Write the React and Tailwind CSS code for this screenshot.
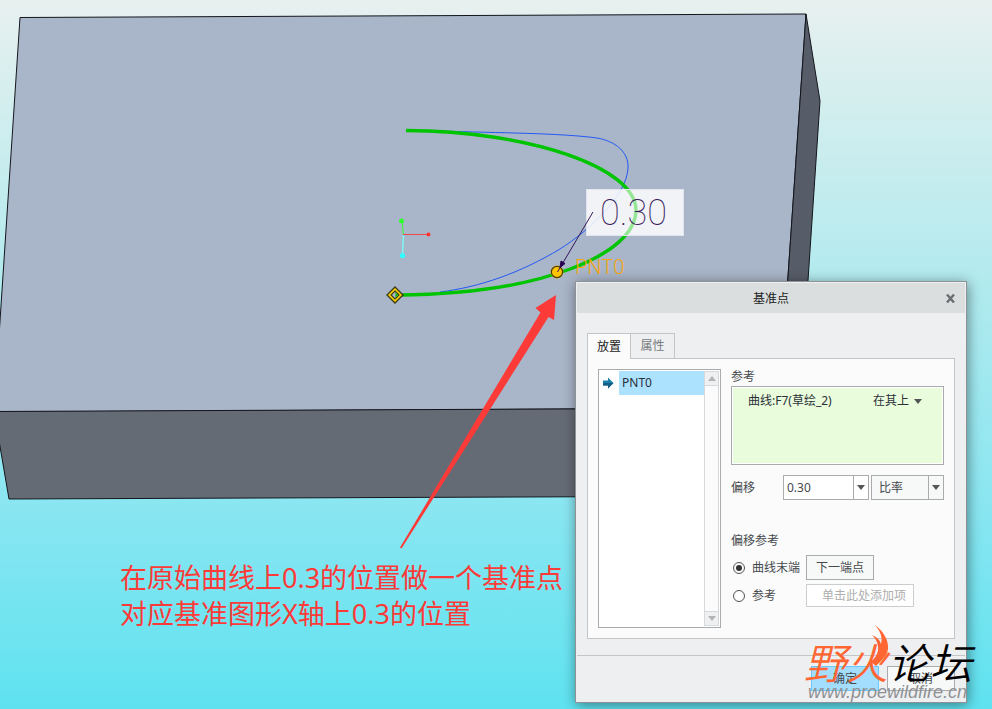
import { useState } from 'react';
import clsx from 'clsx';

const TABS = ['放置', '属性'];

const GREEN_CURVE = 'M406 130.500C530 131 636 168 636 210C636 255 540 294 398 295';

/** Small filled triangle used by drop-downs and scroll buttons */
function Caret({ up = false, className }) {
  return (
    <svg viewBox="0 0 8 5" className={clsx('h-[5px] w-2 shrink-0 fill-current', className)} aria-hidden="true">
      <path d={up ? 'M4 0L8 5H0Z' : 'M0 0H8L4 5Z'} />
    </svg>
  );
}

/** Model viewport: block, sketched curve, datum graph curve and markers */
function Scene() {
  return (
    <svg width="992" height="709" viewBox="0 0 992 709" className="absolute top-0 left-0 max-w-none" fill="none">
      <defs>
        <clipPath id="value-box">
          <rect x="586" y="189" width="98" height="47" />
        </clipPath>
      </defs>

      {/* Block */}
      <g stroke="#14161c" strokeWidth="1">
        <path d="M20 17.5L806 14L779 408L-6 412Z" fill="#a9b5c8" />
        <path d="M-6 411.5L779 408L776 496L9 499Z" fill="#646b75" />
        <path d="M806 14L820 101L794 490L776 496L779 408Z" fill="#575d68" />
      </g>

      {/* Curves */}
      <path
        d="M440 131C500 133 560 133 597 138C615 141 629 152 628 168C627 195 590 230 560 249C520 273 480 287 440 292"
        stroke="#2459f5"
      />
      <path d={GREEN_CURVE} stroke="#00c400" strokeWidth="3.4" />

      {/* Coordinate system */}
      <path d="M402 221L403.500 235" stroke="#30ff30" />
      <path d="M403.500 235L402.500 255" stroke="#7ff5f5" strokeWidth="1.500" />
      <path d="M403 234.500H428" stroke="#f04848" />
      <circle cx="401.500" cy="221" r="2.500" fill="#30ff30" />
      <circle cx="402.500" cy="255.500" r="2.600" fill="#30ffff" />
      <circle cx="428.500" cy="234.500" r="1.900" fill="#ff3030" />

      {/* Curve end */}
      <path d="M395 287L403 295L395 303L387 295Z" fill="#ffd200" stroke="#3c3c1c" strokeWidth="1.400" />
      <path d="M395 291L399 295L395 299L391 295Z" fill="#a9b5c8" stroke="#3c3c1c" strokeWidth="1.200" />
      <path d="M395.500 292.500L398 295L395.500 297.500Z" fill="#00c400" />

      {/* Datum point with value */}
      <text x="575" y="274" fill="#f5a50c" fontSize="20" fontWeight="300" fontFamily="Roboto, sans-serif">
        PNT0
      </text>
      <rect x="586" y="189" width="98" height="47" fill="#fff" fillOpacity="0.84" />
      <path d={GREEN_CURVE} stroke="#00c400" strokeWidth="3.4" opacity="0.3" clipPath="url(#value-box)" />
      <rect x="586.500" y="189.500" width="97" height="46" stroke="#dfe4ee" />
      <circle cx="557" cy="272" r="6.400" fill="#ffc400" />
      <circle cx="557" cy="272" r="5.600" stroke="#4a3c10" strokeWidth="1.200" />
      <path d="M593 212L557.500 272" stroke="#36185c" />
      <path d="M560 267.500L561 261L565 263.500Z" fill="#2a0050" stroke="#2a0050" />
      <text x="600" y="225" fill="#36185c" fontSize="36" fontWeight="100" fontFamily="Roboto, sans-serif">
        0.30
      </text>

      {/* Annotation arrow */}
      <path d="M556 295L535.500 308L540.500 312.500L400 547.500L401.500 548.500L548.500 317L554 320Z" fill="#fc3a38" />
    </svg>
  );
}

function PointList() {
  return (
    <div className="flex h-[259px] w-[123px] shrink-0 border border-[#a9abad] bg-white p-px">
      <div className="grow">
        <button type="button" className="flex h-6 w-full items-center text-left">
          <span className="flex w-[19px] shrink-0 items-center pl-[3px]">
            <svg viewBox="0 0 11 12" className="h-3 w-[11px]" aria-hidden="true">
              <path d="M0 3.500H5V0.500L10.500 6L5 11.500V8.500H0Z" fill="#1b7fab" />
              <path d="M0 6H10.500L5 11.500V8.500H0Z" fill="#155f85" />
            </svg>
          </span>
          <span className="flex h-6 grow items-center bg-[#ade2ff] pl-[3px] text-[#2b3038]">PNT0</span>
        </button>
      </div>
      <div className="flex w-[15px] shrink-0 flex-col justify-between border border-[#d6d9dc] bg-[#fbfbfc] text-[#b4b4b4]">
        <button type="button" aria-label="向上" className="flex h-[14px] items-center justify-center border-b border-[#d6d9dc] bg-[#eff0f2]">
          <Caret up />
        </button>
        <button type="button" aria-label="向下" className="flex h-[14px] items-center justify-center border-t border-[#d6d9dc] bg-[#eff0f2]">
          <Caret />
        </button>
      </div>
    </div>
  );
}

function PlacementForm() {
  const [offset, setOffset] = useState('0.30');
  const [from, setFrom] = useState('end');

  return (
    <div className="min-w-0 grow">
      <div className="h-[17px] leading-4">参考</div>
      <div className="flex h-[79px] items-start border border-[#a9abad] bg-white p-px">
        <div className="flex h-full w-full items-start justify-between bg-[#e9fcdc] pt-[5px] pr-5 pl-[15px] text-[#2b3038]">
          <span className="leading-4">曲线:F7(草绘_2)</span>
          <span className="relative flex items-center">
            <select aria-label="约束" className="appearance-none pr-3 leading-4">
              <option>在其上</option>
            </select>
            <Caret className="pointer-events-none absolute right-0 text-[#555]" />
          </span>
        </div>
      </div>

      {/* Offset */}
      <div className="mt-[10px] flex h-[25px] items-center">
        <label htmlFor="offset" className="w-[52px] shrink-0">偏移</label>
        <div className="flex h-full min-w-0 flex-1 border border-[#a9abad] bg-white">
          <input
            id="offset"
            value={offset}
            onChange={(e) => setOffset(e.target.value)}
            className="w-full min-w-0 pl-[3px] outline-none"
          />
          <button type="button" aria-label="选择偏移" className="flex w-[15px] shrink-0 items-center justify-center border-l border-[#a9abad]">
            <Caret className="text-[#555]" />
          </button>
        </div>
        <div className="relative ml-0.5 h-full w-[73px] border border-[#a9abad] bg-[#f7f8f8]">
          <select aria-label="偏移类型" className="h-full w-full appearance-none pl-[7px]">
            <option>比率</option>
          </select>
          <span className="pointer-events-none absolute inset-y-0 right-0 flex w-[15px] items-center justify-center border-l border-[#a9abad]">
            <Caret className="text-[#555]" />
          </span>
        </div>
      </div>

      {/* Offset reference */}
      <fieldset>
        <legend className="pt-[33px] leading-4">偏移参考</legend>
        <div className="mt-[6px] grid grid-cols-[75px_1fr] items-center gap-y-1">
          <label className="flex items-center gap-[7px] pl-0.5 whitespace-nowrap">
            <input
              type="radio"
              name="from"
              checked={from === 'end'}
              onChange={() => setFrom('end')}
              className="size-3 shrink-0 appearance-none rounded-full border border-[#555] bg-white bg-clip-content p-0.5 checked:bg-[#333]"
            />
            曲线末端
          </label>
          <button type="button" className="h-[25px] w-[68px] border border-[#a9abad] bg-[#f7f8f8]">下一端点</button>
          <label className="flex items-center gap-[7px] pl-0.5">
            <input
              type="radio"
              name="from"
              checked={from === 'ref'}
              onChange={() => setFrom('ref')}
              className="size-3 shrink-0 appearance-none rounded-full border border-[#555] bg-white bg-clip-content p-0.5 checked:bg-[#333]"
            />
            参考
          </label>
          <input
            aria-label="偏移参考项"
            placeholder="单击此处添加项"
            className="h-[23px] w-[108px] border border-[#cbcdcf] bg-white pl-[15px] outline-none placeholder:text-[#adadad]"
          />
        </div>
      </fieldset>
    </div>
  );
}

function DatumPointDialog() {
  const [tab, setTab] = useState('放置');

  return (
    <section
      role="dialog"
      aria-labelledby="dialog-title"
      className="absolute top-[281px] left-[575px] w-[392px] border border-[#8f9294] bg-[#eeeff1] text-xs text-[#45494d] shadow-[1px_2px_12px_rgba(0,0,0,0.45)]"
    >
      <header className="relative m-px flex h-[30px] items-center justify-center bg-[#dadedf]">
        <h1 id="dialog-title" className="pt-0.5 text-[#222]">基准点</h1>
        <button type="button" aria-label="关闭" className="absolute right-[9px] p-px">
          <svg viewBox="0 0 9 9" className="size-[9px]" aria-hidden="true">
            <path d="M1 0.500L8 8.500M8 0.500L1 8.500" stroke="#6c6f71" strokeWidth="2.400" />
          </svg>
        </button>
      </header>

      <div className="px-[11px] pt-[19px]">
        <div role="tablist" className="flex">
          {TABS.map((name) => (
            <button
              key={name}
              type="button"
              role="tab"
              aria-selected={tab === name}
              onClick={() => setTab(name)}
              className={clsx(
                'h-[25px] w-11 border-t border-r border-[#c3c6c9] first:border-l',
                tab === name ? 'relative -mb-px h-[26px] bg-[#fbfbfb] text-[#222]' : 'text-[#777b7e]'
              )}
            >
              {name}
            </button>
          ))}
        </div>
        <div role="tabpanel" className="flex gap-[10px] border border-[#c3c6c9] bg-[#fbfbfb] p-[10px]">
          <PointList />
          <PlacementForm />
        </div>
      </div>

      <footer className="mx-px mt-4 flex justify-end gap-2 border-t border-[#c3c6c9] px-[10px] pt-[10px] pb-[11px]">
        <button type="button" className="h-[25px] w-[68px] border border-[#6cc8fb] bg-[#a3deff]">确定</button>
        <button type="button" className="h-[25px] w-[68px] border border-[#a9abad] bg-[#f7f8f8]">取消</button>
      </footer>
    </section>
  );
}

function Watermark() {
  return (
    <div className="pointer-events-none absolute top-[642px] left-[804px] whitespace-nowrap">
      <p className="text-[42px] leading-[42px] font-[350] italic">
        <span className="text-[#ff6633]">野火</span>
        <span className="text-black">论坛</span>
      </p>
      <p className="pl-1 font-['Liberation_Sans'] text-[18px] leading-4 text-[#8f9294] italic">www.proewildfire.cn</p>
      <svg viewBox="0 0 20 44" className="absolute -top-[18px] left-[66px] h-11 w-5" aria-hidden="true">
        <path
          d="M5 1C13 7 19 16 18 25C17 32 11 37 6 42L1 38C4 35 7 31 8 27C9 20 6 15 2 11C7 13 10 16 11 20C13 13 10 7 5 1Z"
          fill="#ff6633"
        />
      </svg>
    </div>
  );
}

export default function App() {
  return (
    <main className="relative min-h-screen overflow-hidden bg-[linear-gradient(#e7f0ef,#b0eaee_41%,#8ae6f1_71%,#5fe2f0)] font-['Noto_Sans','Noto_Sans_CJK_SC',sans-serif]">
      <Scene />
      <p className="absolute top-[560px] left-[120px] text-[27px] leading-9 whitespace-nowrap text-[#fc3a38]">
        在原始曲线上0.3的位置做一个基准点
        <br />
        对应基准图形X轴上0.3的位置
      </p>
      <DatumPointDialog />
      <Watermark />
    </main>
  );
}
